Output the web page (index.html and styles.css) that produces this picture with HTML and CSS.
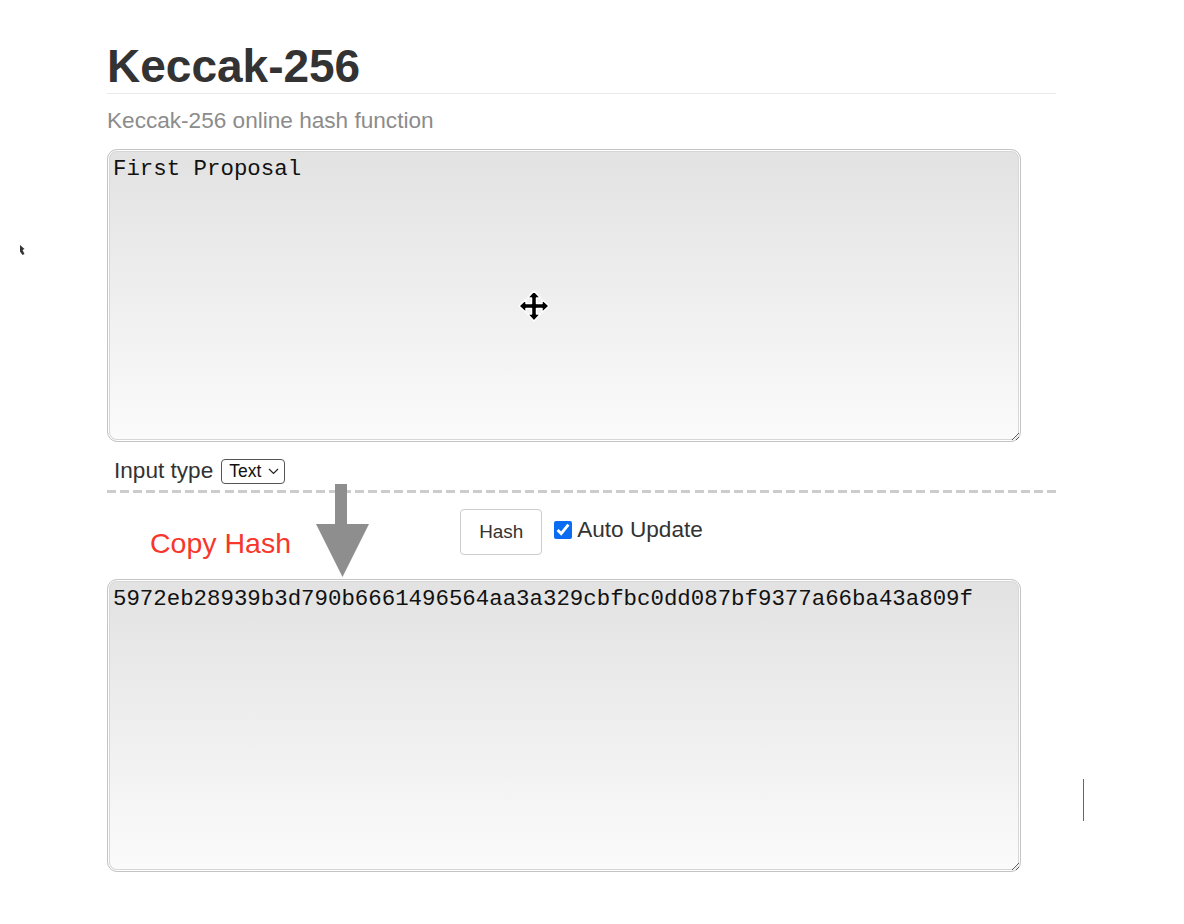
FILE: index.html
```html
<!DOCTYPE html>
<html lang="en">
<head>
<meta charset="utf-8">
<title>Keccak-256</title>
<link rel="stylesheet" href="styles.css">
</head>
<body>
<main class="page">
  <h1 class="title">Keccak-256</h1>
  <p class="subtitle">Keccak-256 online hash function</p>
  <textarea class="box" spellcheck="false">First Proposal</textarea>
  <div class="input-row">
    <span class="input-label">Input type</span>
    <span class="select-wrap">
      <select class="select"><option>Text</option><option>Hex</option></select>
      <svg class="chev" width="11" height="7" viewBox="0 0 11 7"><path d="M1 1 L5.5 5.5 L10 1" fill="none" stroke="#222" stroke-width="1.2"/></svg>
    </span>
  </div>
  <div class="divider"></div>
  <div class="actions">
    <button class="btn" type="button">Hash</button>
    <label class="auto"><input class="check" type="checkbox" checked><span>Auto Update</span></label>
  </div>
  <textarea class="box" spellcheck="false">5972eb28939b3d790b6661496564aa3a329cbfbc0dd087bf9377a66ba43a809f</textarea>
</main>

<div class="copy-hash">Copy Hash</div>
<svg class="arrow" width="56" height="96" viewBox="0 0 56 96">
  <rect x="19" y="0" width="12" height="42" fill="#8e8e8e"/>
  <polygon points="0,40 53,40 26.5,93" fill="#8e8e8e"/>
</svg>
<svg class="move-cursor" width="32" height="32" viewBox="0 0 32 32">
  <path d="M16 1 L22.5 8 L18.5 8 L18.5 13.5 L24 13.5 L24 9.5 L31 16 L24 22.5 L24 18.5 L18.5 18.5 L18.5 24 L22.5 24 L16 31 L9.5 24 L13.5 24 L13.5 18.5 L8 18.5 L8 22.5 L1 16 L8 9.5 L8 13.5 L13.5 13.5 L13.5 8 L9.5 8 Z" fill="#000" stroke="#fff" stroke-width="1.5" stroke-linejoin="round"/>
</svg>
<svg class="tiny-cursor" width="8" height="14" viewBox="0 0 8 14">
  <path d="M1 2 L5.5 6 L3.5 7 L5.5 11 L3.5 12 L1 8.5 Z" fill="#111" opacity="0.85"/>
</svg>
<div class="caret-line"></div>
</body>
</html>
```

FILE: styles.css
```css
html, body {
  margin: 0;
  padding: 0;
  background: #fff;
}

body {
  font-family: "Liberation Sans", Arial, Helvetica, sans-serif;
  color: #333;
}

.page {
  width: 949px;
  margin-left: 107px;
  padding-top: 41px;
  display: flex;
  flex-direction: column;
}

.title {
  margin: 0;
  font-size: 46px;
  line-height: 51px;
  font-weight: bold;
  color: #333;
  padding-bottom: 1px;
  border-bottom: 1px solid #eaeaea;
}

.subtitle {
  margin: 12px 0 0 0;
  font-size: 22.6px;
  line-height: 30px;
  color: #8c8c8c;
}

.box {
  display: block;
  box-sizing: border-box;
  width: 914px;
  height: 293px;
  margin: 13px 0 0 0;
  padding: 6px 5px;
  border: 1px solid #c4c4c4;
  border-radius: 10px;
  box-shadow: inset 0 0 0 1px #fff, inset 0 0 0 2px #d6d6d6;
  background: linear-gradient(#e2e2e2, #fbfbfb);
  font-family: "Liberation Mono", "Courier New", monospace;
  font-size: 22.4px;
  line-height: 26px;
  color: #111;
  resize: both;
  outline: none;
}

.box + .input-row {
  margin-top: 14px;
}

.actions + .box {
  margin-top: 24px;
}

.input-row {
  height: 30px;
  display: flex;
  align-items: center;
  padding-left: 7px;
  gap: 8px;
}

.input-label {
  font-size: 22.6px;
}

.select-wrap {
  position: relative;
  display: inline-flex;
}

.select {
  appearance: none;
  -webkit-appearance: none;
  box-sizing: border-box;
  width: 64px;
  height: 25px;
  padding: 0 0 0 7px;
  border: 1px solid #555;
  border-radius: 4px;
  background: #fff;
  font-family: "Liberation Sans", Arial, sans-serif;
  font-size: 17.5px;
  color: #111;
}

.chev {
  position: absolute;
  right: 6px;
  top: 9px;
  pointer-events: none;
}

.divider {
  margin-top: 4px;
  height: 3px;
  background: repeating-linear-gradient(90deg, #cccccc 0 9px, transparent 9px 13.056px);
}

.actions {
  margin-top: 16px;
  height: 46px;
  display: flex;
  align-items: center;
  justify-content: center;
  gap: 12px;
}

.btn {
  box-sizing: border-box;
  width: 82px;
  height: 46px;
  background: #fff;
  border: 1px solid #cccccc;
  border-radius: 4px;
  font-family: "Liberation Sans", Arial, sans-serif;
  font-size: 18.9px;
  color: #333;
  padding: 0;
}

.auto {
  display: flex;
  align-items: center;
  gap: 5px;
  font-size: 22.6px;
  color: #333;
  margin-top: -4px;
}

.check {
  width: 18px;
  height: 18px;
  margin: 0;
  accent-color: #0a6cf2;
}

.copy-hash {
  position: absolute;
  left: 150px;
  top: 526px;
  font-size: 28.5px;
  line-height: 34px;
  color: #f7372c;
}

.arrow {
  position: absolute;
  left: 316px;
  top: 484px;
}

.move-cursor {
  position: absolute;
  left: 518px;
  top: 290px;
}

.tiny-cursor {
  position: absolute;
  left: 19px;
  top: 243px;
}

.caret-line {
  position: absolute;
  left: 1083px;
  top: 779px;
  width: 1px;
  height: 42px;
  background: #666;
}
```
